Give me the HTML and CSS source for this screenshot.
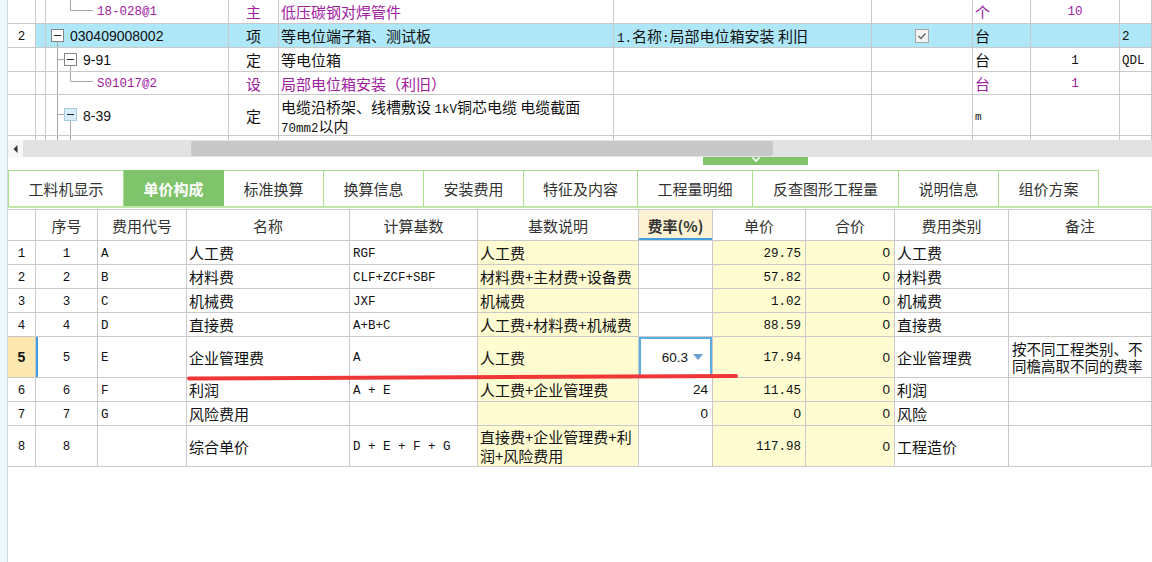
FILE: index.html
```html
<!DOCTYPE html>
<html lang="zh">
<head>
<meta charset="utf-8">
<title>单价构成</title>
<link rel="stylesheet" href="styles.css">
</head>
<body>
<div class="app">
  <div class="side"></div>
  <div class="main">

    <div class="top">
      <div class="tg">
        <div class="row r0">
          <div class="c"></div><div class="c"></div>
          <div class="c code">
            <svg width="51" height="24" class="tree"><path d="M24.5 0V11.5H47" /></svg>
            <span class="m purple">18-028@1</span>
          </div>
          <div class="c ctr purple">主</div>
          <div class="c purple">低压碳钢对焊管件</div>
          <div class="c"></div><div class="c"></div>
          <div class="c purple">个</div>
          <div class="c ctr purple"><span class="m">10</span></div>
          <div class="c"></div>
        </div>
        <div class="row r1 sel">
          <div class="c ctr nosel"><span class="m">2</span></div><div class="c"></div>
          <div class="c code">
            <svg width="24" height="23" class="tree"><path d="M11.5 17.5V23" /><rect class="box" x="5.5" y="5.5" width="12" height="12" /><path class="minus" d="M8 11.5H15" /></svg>
            <span class="s">030409008002</span>
          </div>
          <div class="c ctr">项</div>
          <div class="c">等电位端子箱、测试板</div>
          <div class="c pad3"><span class="t"><span class="mi">1.</span>名称<span class="mi">:</span>局部电位箱安装 利旧</span></div>
          <div class="c ctr"><svg width="14" height="14" class="chk"><rect x="0.5" y="0.5" width="13" height="13" /><path d="M3.5 7L6 9.5L10.5 4.5" /></svg></div>
          <div class="c">台</div>
          <div class="c"></div>
          <div class="c"><span class="m">2</span></div>
        </div>
        <div class="row r2">
          <div class="c"></div><div class="c"></div>
          <div class="c code">
            <svg width="37" height="23" class="tree"><path d="M11.5 0V23M11.5 11.5H18.5M24.5 17.5V23" /><rect class="box" x="18.5" y="5.5" width="12" height="12" /><path class="minus" d="M21 11.5H28" /></svg>
            <span class="s">9-91</span>
          </div>
          <div class="c ctr">定</div>
          <div class="c">等电位箱</div>
          <div class="c"></div><div class="c"></div>
          <div class="c">台</div>
          <div class="c ctr"><span class="m">1</span></div>
          <div class="c"><span class="m">QDL</span></div>
        </div>
        <div class="row r3">
          <div class="c"></div><div class="c"></div>
          <div class="c code">
            <svg width="51" height="22" class="tree"><path d="M11.5 0V22M24.5 0V9.5H47" /></svg>
            <span class="m purple">S01017@2</span>
          </div>
          <div class="c ctr purple">设</div>
          <div class="c purple">局部电位箱安装（利旧）</div>
          <div class="c"></div><div class="c"></div>
          <div class="c purple">台</div>
          <div class="c ctr purple"><span class="m">1</span></div>
          <div class="c"></div>
        </div>
        <div class="row r4">
          <div class="c"></div><div class="c"></div>
          <div class="c code">
            <svg width="37" height="40" class="tree"><path d="M11.5 0V40M11.5 19.5H18.5M24.5 25.5V40" /><rect class="box lb" x="18.5" y="13.5" width="12" height="12" /><path class="minus" d="M21 19.5H28" /></svg>
            <span class="s">8-39</span>
          </div>
          <div class="c ctr">定</div>
          <div class="c"><span class="t">电缆沿桥架、线槽敷设 <span class="mi">1kV</span>铜芯电缆 电缆截面<br><span class="mi">70mm2</span>以内</span></div>
          <div class="c"></div><div class="c"></div>
          <div class="c"><span class="tiny">m</span></div>
          <div class="c"></div>
          <div class="c"></div>
        </div>
        <div class="row r5">
          <div class="c"></div><div class="c"></div>
          <div class="c code">
            <svg width="37" height="23" class="tree"><path d="M11.5 0V23M24.5 0V23" /></svg>
          </div>
          <div class="c"></div><div class="c"></div><div class="c"></div><div class="c"></div>
          <div class="c"></div><div class="c"></div><div class="c"></div>
        </div>
      </div>
    </div>

    <div class="hs">
      <div class="btn"><svg width="5" height="8"><path d="M4.5 0V8L0.5 4Z" /></svg></div>
      <div class="track"><div class="thumb"></div></div>
    </div>

    <div class="split">
      <div class="grip"><svg width="10" height="6"><path d="M1.5 0.5L5 4L8.5 0.5" /></svg></div>
    </div>

    <div class="tabs">
      <div class="tab t1">工料机显示</div>
      <div class="tab on">单价构成</div>
      <div class="tab">标准换算</div>
      <div class="tab">换算信息</div>
      <div class="tab">安装费用</div>
      <div class="tab w114">特征及内容</div>
      <div class="tab w115">工程量明细</div>
      <div class="tab w146">反查图形工程量</div>
      <div class="tab">说明信息</div>
      <div class="tab">组价方案</div>
    </div>

    <div class="fee">
      <div class="row hd">
        <div class="c"></div>
        <div class="c">序号</div>
        <div class="c">费用代号</div>
        <div class="c">名称</div>
        <div class="c">计算基数</div>
        <div class="c">基数说明</div>
        <div class="c rate">费率(%)</div>
        <div class="c">单价</div>
        <div class="c">合价</div>
        <div class="c">费用类别</div>
        <div class="c">备注</div>
      </div>

      <div class="row">
        <div class="c n"><span class="m">1</span></div><div class="c n"><span class="m">1</span></div><div class="c a"><span class="m">A</span></div>
        <div class="c">人工费</div><div class="c a"><span class="m">RGF</span></div>
        <div class="c y">人工费</div><div class="c r"></div>
        <div class="c y r"><span class="m">29.75</span></div><div class="c y r"><span class="s">0</span></div>
        <div class="c">人工费</div><div class="c"></div>
      </div>
      <div class="row">
        <div class="c n"><span class="m">2</span></div><div class="c n"><span class="m">2</span></div><div class="c a"><span class="m">B</span></div>
        <div class="c">材料费</div><div class="c a"><span class="m">CLF+ZCF+SBF</span></div>
        <div class="c y">材料费+主材费+设备费</div><div class="c r"></div>
        <div class="c y r"><span class="m">57.82</span></div><div class="c y r"><span class="s">0</span></div>
        <div class="c">材料费</div><div class="c"></div>
      </div>
      <div class="row">
        <div class="c n"><span class="m">3</span></div><div class="c n"><span class="m">3</span></div><div class="c a"><span class="m">C</span></div>
        <div class="c">机械费</div><div class="c a"><span class="m">JXF</span></div>
        <div class="c y">机械费</div><div class="c r"></div>
        <div class="c y r"><span class="m">1.02</span></div><div class="c y r"><span class="s">0</span></div>
        <div class="c">机械费</div><div class="c"></div>
      </div>
      <div class="row">
        <div class="c n"><span class="m">4</span></div><div class="c n"><span class="m">4</span></div><div class="c a"><span class="m">D</span></div>
        <div class="c">直接费</div><div class="c a"><span class="m">A+B+C</span></div>
        <div class="c y">人工费+材料费+机械费</div><div class="c r"></div>
        <div class="c y r"><span class="m">88.59</span></div><div class="c y r"><span class="s">0</span></div>
        <div class="c">直接费</div><div class="c"></div>
      </div>
      <div class="row tall">
        <div class="c n cur">5</div><div class="c n curl"><span class="m">5</span></div><div class="c a"><span class="m">E</span></div>
        <div class="c">企业管理费</div><div class="c a"><span class="m">A</span></div>
        <div class="c y">人工费</div>
        <div class="c r edit"><span class="s">60.3</span><svg width="10" height="6"><path d="M0 0H10L5 6Z" /></svg></div>
        <div class="c y r"><span class="m">17.94</span></div><div class="c y r"><span class="s">0</span></div>
        <div class="c">企业管理费</div>
        <div class="c note"><span class="t">按不同工程类别、不<br>同檐高取不同的费率</span></div>
      </div>
      <div class="row">
        <div class="c n"><span class="m">6</span></div><div class="c n"><span class="m">6</span></div><div class="c a"><span class="m">F</span></div>
        <div class="c">利润</div><div class="c a"><span class="m">A + E</span></div>
        <div class="c y">人工费+企业管理费</div><div class="c r"><span class="s">24</span></div>
        <div class="c y r"><span class="m">11.45</span></div><div class="c y r"><span class="s">0</span></div>
        <div class="c">利润</div><div class="c"></div>
      </div>
      <div class="row">
        <div class="c n"><span class="m">7</span></div><div class="c n"><span class="m">7</span></div><div class="c a"><span class="m">G</span></div>
        <div class="c">风险费用</div><div class="c a"></div>
        <div class="c y"></div><div class="c r"><span class="s">0</span></div>
        <div class="c y r"><span class="s">0</span></div><div class="c y r"><span class="s">0</span></div>
        <div class="c">风险</div><div class="c"></div>
      </div>
      <div class="row tall">
        <div class="c n"><span class="m">8</span></div><div class="c n"><span class="m">8</span></div><div class="c a"></div>
        <div class="c">综合单价</div><div class="c a"><span class="m">D + E + F + G</span></div>
        <div class="c y"><span class="t">直接费+企业管理费+利<br>润+风险费用</span></div><div class="c r"></div>
        <div class="c y r"><span class="m">117.98</span></div><div class="c y r"><span class="s">0</span></div>
        <div class="c">工程造价</div><div class="c"></div>
      </div>
    </div>

  </div>

  <svg class="mark" width="1152" height="562" viewBox="0 0 1152 562">
    <path d="M189 378.5C330 378 520 376.5 736 376" />
  </svg>
</div>
</body>
</html>
```

FILE: styles.css
```css
* { box-sizing: border-box; margin: 0; padding: 0; }

html, body {
  width: 1152px;
  height: 562px;
  overflow: hidden;
  background: #ffffff;
}

body {
  font-family: "Noto Sans CJK SC", "Liberation Sans", sans-serif;
  font-size: 15px;
  color: #111111;
}

.app {
  position: relative;
  display: flex;
  height: 562px;
}

.side {
  flex: none;
  width: 8px;
  background: #ecf7fc;
  border-right: 1px solid #cfd9de;
}

.main {
  flex: 1;
  min-width: 0;
  display: flex;
  flex-direction: column;
  overflow: hidden;
}

/* generic grid rows */
.row {
  display: grid;
  border-bottom: 1px solid #c9c9c9;
}

.c {
  display: flex;
  align-items: center;
  padding: 0 2px;
  border-right: 1px solid #c9c9c9;
  white-space: nowrap;
  overflow: hidden;
  line-height: 19px;
}

.t { display: block; line-height: 19px; }

.ctr { justify-content: center; }
.pad3 { padding-left: 3px; }

/* standalone monospace run (codes, numbers) */
.m {
  display: block;
  font-family: "Liberation Mono", monospace;
  font-size: 12.5px;
  line-height: 15px;
  padding-top: 3px;
}

/* inline monospace run inside CJK text */
.mi {
  font-family: "Liberation Mono", monospace;
  font-size: 12.5px;
  line-height: 1;
}

.s {
  display: block;
  font-family: "Liberation Sans", sans-serif;
  font-size: 14px;
  line-height: 16px;
  padding-top: 1px;
}

.purple { color: #a0209e; }

/* top tree grid */
.top {
  flex: none;
  height: 140px;
  overflow: hidden;
}

.tg { margin-top: -1px; }

.tg .row {
  grid-template-columns: 28px 10px 183px 50px 335px 258px 101px 58px 89px 1fr;
}

.tg .r0 { height: 25px; }
.tg .r1 { height: 24px; }
.tg .r2 { height: 24px; }
.tg .r3 { height: 23px; }
.tg .r4 { height: 41px; }
.tg .r5 { height: 24px; }

.tg .r4 .t { padding-top: 2px; }

.tg .sel { background: #aee7f8; }
.tg .sel .nosel { background: #ffffff; }

.code { padding-left: 0; }

.tree { flex: none; display: block; }
.tree path { fill: none; stroke: #a6a6a6; stroke-width: 1; }
.tree .box { fill: #ffffff; stroke: #858585; stroke-width: 1; }
.tree .box.lb { fill: #d6eef9; stroke: #a8cde0; }
.tree .minus { stroke: #222222; }

.chk rect { fill: #f3f3f3; stroke: #a5a5a5; }
.chk path { fill: none; stroke: #6a6a6a; stroke-width: 1.5; }

.tiny {
  display: block;
  font-family: "Liberation Mono", monospace;
  font-size: 11px;
  line-height: 13px;
  padding-top: 4px;
}

/* horizontal scrollbar */
.hs {
  flex: none;
  display: flex;
  height: 17px;
  background: #e2e2e2;
}

.hs .btn {
  flex: none;
  width: 15px;
  background: #f7f7f7;
  display: flex;
  align-items: center;
  justify-content: center;
}

.hs .btn path { fill: #333333; }

.hs .track {
  flex: 1;
  padding: 1px 0;
}

.hs .thumb {
  margin-left: 168px;
  width: 582px;
  height: 100%;
  background: #c8c8c8;
  border-radius: 3px;
}

/* splitter */
.split {
  flex: none;
  height: 13px;
}

.grip {
  margin-left: 695px;
  width: 105px;
  height: 8px;
  background: #7fc46a;
  display: flex;
  justify-content: center;
}

.grip path { fill: none; stroke: #ffffff; stroke-width: 1.6; }

/* tabs */
.tabs {
  flex: none;
  display: flex;
  height: 38px;
  border-bottom: 2px solid #bde8aa;
}

.tab {
  flex: none;
  width: 100px;
  display: flex;
  align-items: center;
  justify-content: center;
  border-top: 1px solid #a8e08e;
  border-right: 1px solid #a8e08e;
  color: #333333;
  font-size: 15px;
  background: #ffffff;
}

.tab.t1 { width: 116px; border-left: 1px solid #a8e08e; }
.tab.w114 { width: 114px; }
.tab.w115 { width: 115px; }
.tab.w146 { width: 146px; }

.tab.on {
  background: #7fc46a;
  border-color: #7fc46a;
  color: #ffffff;
  font-weight: bold;
}

/* fee table */
.fee {
  margin-top: 1px;
  border-top: 1px solid #c9c9c9;
}

.fee .row {
  height: 24px;
  grid-template-columns: 28px 62px 89px 163px 128px 161px 74px 93px 89px 114px 1fr;
}

.fee .row.hd { height: 31px; }
.fee .row.tall { height: 41px; }

.fee .hd .c {
  justify-content: center;
  color: #333333;
}

.fee .hd .rate {
  background: #fdf3d4;
  font-weight: bold;
  box-shadow: inset 0 -2px 0 #3f9de0;
}

.fee .n { justify-content: center; }

.fee .a { padding-left: 3px; }

.fee .y { background: #fffcd1; }

.fee .r {
  justify-content: flex-end;
  padding-right: 4px;
}

.fee .r .s { font-size: 13.5px; }

.fee .cur {
  background: #fde8b2;
  font-weight: bold;
  font-family: "Liberation Sans", sans-serif;
  font-size: 14px;
}

.fee .curl { box-shadow: inset 2px 0 0 #3f9de0; }

.fee .edit {
  background: #ffffff;
  box-shadow: inset 0 0 0 2px #5aaee4;
  padding-right: 9px;
}

.fee .edit svg { margin-left: 5px; flex: none; }
.fee .edit path { fill: #6a9fd2; }

.fee .note { padding-left: 3px; }
.fee .note .t { font-size: 14.5px; line-height: 17px; }

/* hand-drawn annotation */
.mark {
  position: absolute;
  left: 0;
  top: 0;
  pointer-events: none;
}

.mark path {
  fill: none;
  stroke: #ef3737;
  stroke-width: 4;
  stroke-linecap: round;
}
```
